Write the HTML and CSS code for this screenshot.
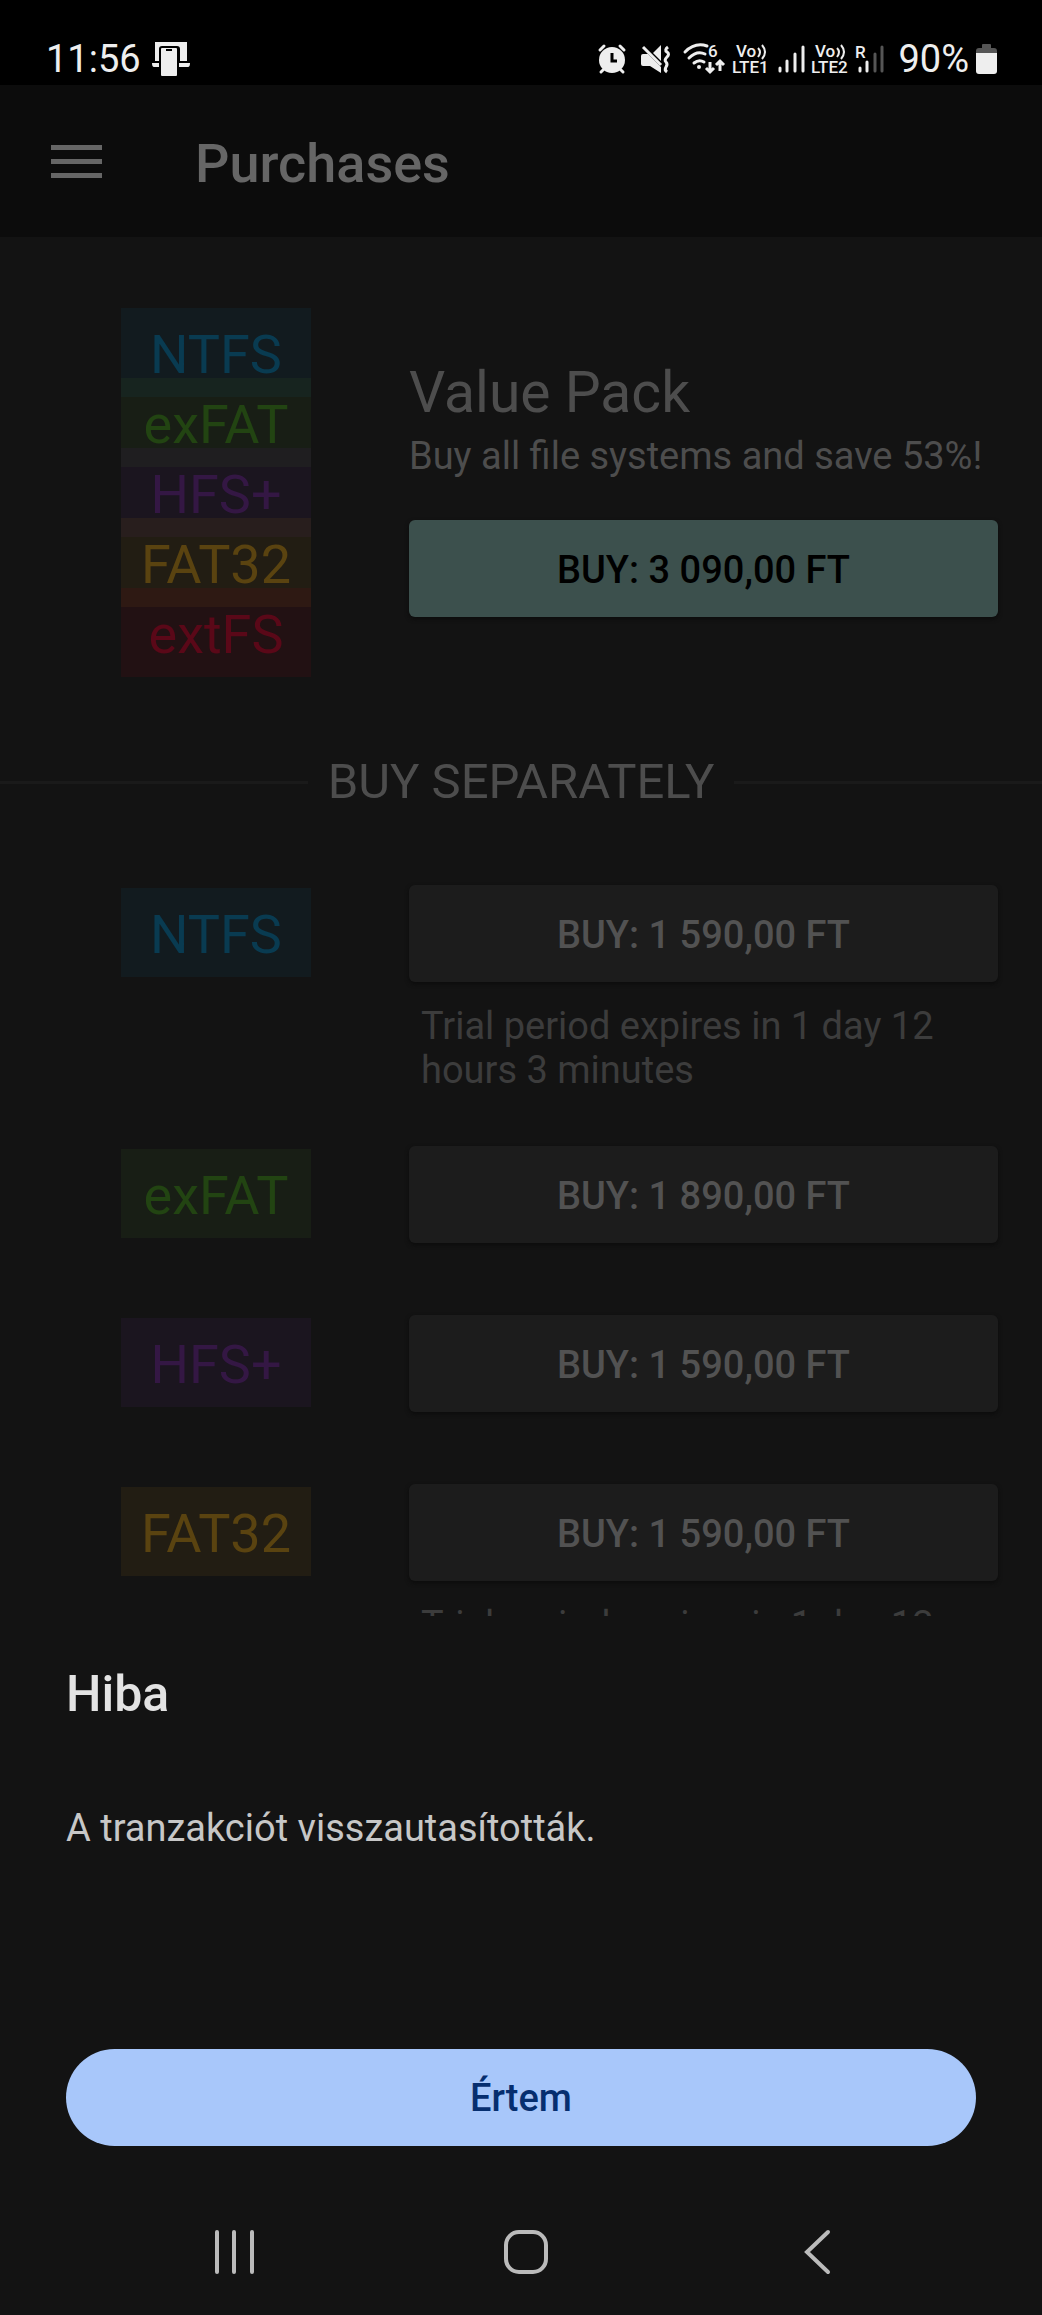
FILE: index.html
```html
<!DOCTYPE html>
<html lang="en">

<head>
  <meta charset="UTF-8">
  <meta name="viewport" content="width=device-width, initial-scale=1.0">
  <title>Purchases</title>
  <link rel="stylesheet" href="styles.css">
</head>

<body>
  <div class="status">
    <span class="status-text">11:56</span>
    <svg class="cast" width="38" height="36" viewBox="0 0 38 36">
      <path d="M3 20V1h32v19h-7V8q0-3-3-3H10q-3 0-3 3v12z" fill="#eee" />
      <rect x="9" y="7" width="16" height="28" rx="1" fill="#eee" />
      <path d="M14 9h6" stroke="#000" stroke-width="2" />
      <path d="M0 22h7v4H2q-2 0-2-4zM27 22h11q0 4-2 4h-9z" fill="#eee" />
    </svg>
    <div class="status-icons">
      <svg width="28" height="30" viewBox="0 0 28 30">
        <circle cx="14" cy="16" r="13" fill="#eee" />
        <path d="M2 6l4-4M26 6l-4-4M5 26l-2 2M23 26l2 2" stroke="#eee" stroke-width="3" stroke-linecap="round" />
        <path d="M14 9v8h5" fill="none" stroke="#000" stroke-width="3" />
      </svg>
      <svg class="mute" width="30" height="30" viewBox="0 0 30 30">
        <path d="M2 10h5l13 13v6L9 22H2q-2 0-2-2v-8q0-2 2-2zM20 1v16l-8-8z" fill="#eee" />
        <path d="M2 3l18 18" stroke="#eee" stroke-width="3" />
        <path d="M27 3q-4 3-1 5t0 5-1 5 0 5 1 5" fill="none" stroke="#eee" stroke-width="3" />
      </svg>
      <svg class="wifi" width="43" height="38" viewBox="0 -3 43 38">
        <g fill="none" stroke="#eee" stroke-width="3" stroke-linecap="round">
          <path d="M2 9Q12-1 24 3M6 15q8-8 16-4M11 20q5-4 10-1" />
        </g>
        <circle cx="16" cy="24" r="2" fill="#eee" />
        <path d="M27 19v10m-4-4l4 4 4-4M37 28V18m-4 4l4-4 4 4" fill="none" stroke="#eee" stroke-width="3" />
        <text x="25" y="14" class="svg-label">6</text>
      </svg>
      <svg class="lte" width="38" height="38" viewBox="0 -3 38 38">
        <text x="4" y="14" class="svg-label">Vo</text>
        <path d="M26 5q4 4 0 9M30 2q6 7 0 14" fill="none" stroke="#eee" stroke-width="2" />
        <text x="0" y="30" class="svg-label">LTE1</text>
      </svg>
      <svg class="bars" width="27" height="30" viewBox="0 0 27 30">
        <path d="M2 24v3M9 17v10M17 10v17M25 3v24" stroke="#eee" stroke-width="3" stroke-linecap="round" />
      </svg>
      <svg class="lte" width="38" height="38" viewBox="0 -3 38 38">
        <text x="4" y="14" class="svg-label">Vo</text>
        <path d="M26 5q4 4 0 9M30 2q6 7 0 14" fill="none" stroke="#eee" stroke-width="2" />
        <text x="0" y="30" class="svg-label">LTE2</text>
      </svg>
      <svg class="roaming" width="30" height="38" viewBox="0 -4 30 38">
        <path d="M5 24v3M12 18v9" stroke="#eee" stroke-width="3" stroke-linecap="round" />
        <path d="M20 10v17M27 3v24" stroke="#555" stroke-width="3" stroke-linecap="round" />
        <text x="0" y="14" class="svg-label">R</text>
      </svg>
      <span class="status-text">90%</span>
      <svg class="battery" width="21" height="32" viewBox="0 0 21 32">
        <path d="M6 2q0-1 1-1h7q1 0 1 1v3h3q3 0 3 3v4H0V8q0-3 3-3h3z" fill="#555" />
        <path d="M0 10h21v18q0 3-3 3H3q-3 0-3-3z" fill="#eee" />
      </svg>
    </div>
  </div>

  <header class="appbar">
    <button class="menu" aria-label="Menu"><span></span><span></span><span></span></button>
    <h1>Purchases</h1>
  </header>

  <main>
    <section class="pack">
      <div class="stack">
        <div class="fs ntfs">NTFS</div>
        <div class="fs exfat">exFAT</div>
        <div class="fs hfs">HFS+</div>
        <div class="fs fat32">FAT32</div>
        <div class="fs extfs">extFS</div>
      </div>
      <div class="info">
        <h2>Value Pack</h2>
        <p>Buy all file systems and save 53%!</p>
        <button class="buy primary">BUY: 3 090,00 FT</button>
      </div>
    </section>

    <div class="divider">BUY SEPARATELY</div>

    <section class="item noted">
      <div class="fs ntfs">NTFS</div>
      <div class="info">
        <button class="buy">BUY: 1 590,00 FT</button>
        <p class="trial">Trial period expires in 1 day 12 hours 3 minutes</p>
      </div>
    </section>
    <section class="item">
      <div class="fs exfat">exFAT</div>
      <div class="info">
        <button class="buy">BUY: 1 890,00 FT</button>
      </div>
    </section>
    <section class="item">
      <div class="fs hfs">HFS+</div>
      <div class="info">
        <button class="buy">BUY: 1 590,00 FT</button>
      </div>
    </section>
    <section class="item noted">
      <div class="fs fat32">FAT32</div>
      <div class="info">
        <button class="buy">BUY: 1 590,00 FT</button>
        <p class="trial">Trial period expires in 1 day 12 hours 3 minutes</p>
      </div>
    </section>
  </main>

  <div class="sheet" role="dialog" aria-labelledby="sheet-title" lang="hu">
    <h2 id="sheet-title">Hiba</h2>
    <p>A tranzakciót visszautasították.</p>
    <button class="ok">Értem</button>
  </div>

  <nav class="navbar">
    <button aria-label="Recents">
      <svg width="44" height="46" viewBox="0 0 44 46">
        <path d="M4 3v40M21 3v40M39 3v40" stroke="#bbb" stroke-width="4" stroke-linecap="round" />
      </svg>
    </button>
    <button aria-label="Home">
      <svg width="44" height="46" viewBox="0 0 44 46">
        <rect x="2" y="3" width="40" height="40" rx="13" fill="none" stroke="#bbb" stroke-width="4" />
      </svg>
    </button>
    <button aria-label="Back">
      <svg width="44" height="46" viewBox="0 0 44 46">
        <path d="M33 3L12 23l21 20" fill="none" stroke="#bbb" stroke-width="4" stroke-linecap="round" />
      </svg>
    </button>
  </nav>
</body>

</html>
```

FILE: styles.css
```css
* {
  box-sizing: border-box;
}

body {
  margin: 0;
  height: 100vh;
  display: flex;
  flex-direction: column;
  background: #131313;
  font-family: Roboto, sans-serif;
  font-size: 38px;
  line-height: 44px;
}

h1,
h2,
p {
  margin: 0;
}

button {
  border: 0;
  padding: 0;
  font: inherit;
  cursor: pointer;
}

svg {
  display: block;
  flex: none;
  overflow: visible;
}

/* status bar */
.status {
  display: flex;
  align-items: center;
  height: 85px;
  flex: none;
  padding: 33px 45px 0 46px;
  background: #000;
  color: #eee;
}

.cast {
  margin-left: 11px;
}

.status-icons {
  display: flex;
  align-items: center;
  margin-left: auto;
}

.mute {
  margin-left: 15px;
}

.wifi {
  margin-left: 12px;
}

.lte,
.roaming {
  margin-left: 6px;
}

.bars {
  margin-left: 8px;
}

.roaming + .status-text {
  margin-left: 13px;
}

.battery {
  margin-left: 7px;
}

.svg-label {
  fill: #eee;
  font-size: 17px;
  font-weight: 500;
}

/* app bar */
.appbar {
  display: flex;
  align-items: center;
  flex: none;
  height: 152px;
  padding: 0 51px;
  background: #0c0c0c;
}

.menu {
  display: flex;
  flex-direction: column;
  gap: 9px;
  width: 51px;
  background: none;
}

.menu span {
  height: 5px;
  background: #666;
}

h1 {
  margin-left: 93px;
  padding-top: 6px;
  color: #666;
  font-size: 54px;
  font-weight: 500;
  line-height: 64px;
}

/* purchases */
main {
  flex: 1;
  min-height: 0;
  overflow: hidden;
}

.pack,
.item {
  display: flex;
  padding: 0 44px 72px 121px;
}

.pack {
  align-items: center;
  padding-top: 71px;
}

.noted {
  padding-bottom: 54px;
}

.fs {
  flex: none;
  width: 190px;
  height: 89px;
  font-size: 54px;
  line-height: 94px;
  text-align: center;
}

.item .fs {
  margin-top: 3px;
}

.stack .fs + .fs {
  margin-top: -19px;
}

.ntfs {
  color: #093b51;
  background: rgba(12, 72, 99, 0.15);
}

.exfat {
  color: #224412;
  background: rgba(52, 92, 32, 0.15);
}

.hfs {
  color: #341744;
  background: rgba(72, 32, 99, 0.15);
}

.fat32 {
  color: #5a4310;
  background: rgba(119, 86, 19, 0.15);
}

.extfs {
  color: #5a0818;
  background: rgba(119, 6, 19, 0.15);
}

.info {
  flex: 1;
  margin-left: 98px;
  color: #4d4d4d;
}

.pack .info {
  padding-bottom: 9px;
}

.info h2 {
  margin-bottom: 8px;
  font-size: 57px;
  font-weight: 400;
  line-height: 66px;
}

.buy {
  display: block;
  width: 100%;
  height: 97px;
  padding-top: 3px;
  border-radius: 6px;
  background: #1c1c1c;
  box-shadow: 0 2px 4px #0c0c0c;
  color: #525252;
  font-weight: 500;
}

.primary {
  margin-top: 42px;
  background: #3c504d;
  color: #000;
}

.trial {
  margin-top: 22px;
  padding: 0 12px;
  color: #3c3c3c;
}

.divider {
  display: flex;
  align-items: center;
  gap: 20px;
  margin: 4px 0 74px;
  color: #4d4d4d;
  font-size: 49px;
  line-height: 58px;
}

.divider::before,
.divider::after {
  content: "";
  flex: 1;
  height: 3px;
  background: #1a1a1a;
}

/* error sheet */
.sheet {
  flex: none;
  padding: 48px 66px 47px;
  background: #131313;
  color: #c7c7c7;
}

.sheet h2 {
  color: #e3e3e3;
  font-size: 50px;
  font-weight: 500;
  line-height: 60px;
}

.sheet p {
  margin: 82px 0 199px;
}

.ok {
  display: block;
  width: 100%;
  height: 97px;
  border-radius: 49px;
  background: #a8c7fa;
  color: #062e6f;
  font-weight: 500;
}

/* system navigation */
.navbar {
  display: flex;
  flex: none;
  justify-content: space-between;
  padding: 36px 203px 40px 213px;
}

.navbar button {
  background: none;
}
```
